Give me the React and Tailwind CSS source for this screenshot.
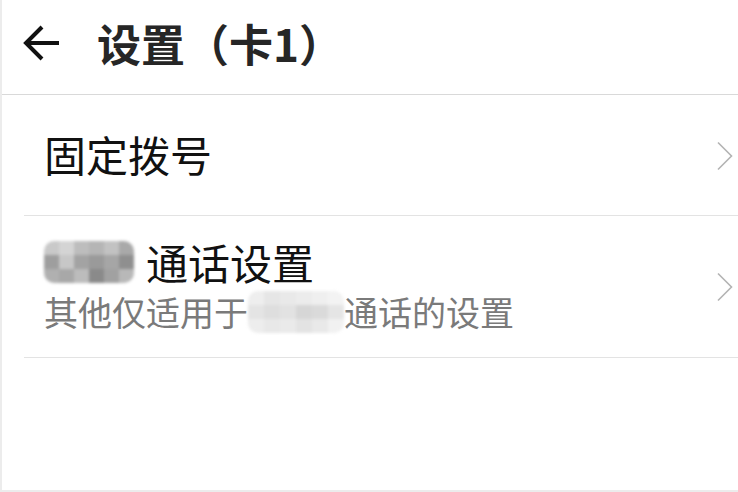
const font = { fontFamily: '"Noto Sans CJK SC", "Noto Sans", sans-serif' };

function BackArrow() {
  return (
    <svg width="38" height="38" viewBox="0 0 38 38" className="shrink-0">
      <path
        d="M3 19 H36 M19 3 L3 19 L19 35"
        fill="none"
        stroke="#111"
        strokeWidth="4"
        strokeLinecap="butt"
        strokeLinejoin="miter"
      />
    </svg>
  );
}

function Chevron() {
  return (
    <svg width="18" height="30" viewBox="0 0 18 30" className="shrink-0">
      <path d="M2 1.5 L15.5 15 L2 28.5" fill="none" stroke="#b3b3b3" strokeWidth="1.6" />
    </svg>
  );
}

function Mosaic({ cells, className }) {
  return (
    <div className={"grid grid-cols-6 overflow-hidden rounded-[10px] blur-[1.5px] " + className}>
      {cells.map((c, i) => (
        <div key={i} className="h-[14px]" style={{ background: c }} />
      ))}
    </div>
  );
}

const simCells = [
  "#c9c9c9", "#d4d4d4", "#bdbdbd", "#b5b5b5", "#c2c2c2", "#a9a9a9",
  "#9e9e9e", "#c7c7c7", "#a3a3a3", "#9a9a9a", "#a6a6a6", "#8f8f8f",
  "#b0b0b0", "#a8a8a8", "#bcbcbc", "#8a8a8a", "#a1a1a1", "#b8b8b8",
];

const subCells = [
  "#eeeeee", "#e6e6e6", "#e9e9e9", "#ececec", "#efefef", "#f3f3f3",
  "#e4e4e4", "#dedede", "#e2e2e2", "#d6d6d6", "#dadada", "#e5e5e5",
  "#ededed", "#e8e8e8", "#eaeaea", "#e3e3e3", "#e9e9e9", "#f1f1f1",
];

export default function App() {
  return (
    <div
      className="w-[738px] h-[492px] bg-white border-l-2 border-b-2 border-[#ececec] overflow-hidden"
      style={font}
    >
      <header className="h-[95px] flex items-center pb-[9px] pl-[21px] border-b border-[#d9d9d9]">
        <BackArrow />
        <h1 className="ml-[36px] text-[44px] leading-none font-bold text-[#262626]">
          设置（卡1）
        </h1>
      </header>

      <div className="pl-[22px]">
        <div className="h-[121px] flex items-center pb-[2px] border-b border-[#e3e3e3]">
          <span className="flex-1 pl-[20px] text-[42px] leading-none text-[#111]">固定拨号</span>
          <div className="pr-[4px] pt-[4px]">
            <Chevron />
          </div>
        </div>

        <div className="h-[142px] flex items-center border-b border-[#e3e3e3]">
          <div className="flex-1 pl-[20px] flex flex-col">
            <div className="flex items-center h-[50px]">
              <Mosaic cells={simCells} className="w-[90px] mr-[12px]" />
              <span className="text-[42px] leading-none text-[#111]">通话设置</span>
            </div>
            <div className="flex items-center h-[50px]">
              <span className="text-[34px] leading-none text-[#7a7a7a]">其他仅适用于</span>
              <Mosaic cells={subCells} className="w-[96px] h-[42px]" />
              <span className="text-[34px] leading-none text-[#7a7a7a]">通话的设置</span>
            </div>
          </div>
          <div className="pr-[4px]">
            <Chevron />
          </div>
        </div>
      </div>
    </div>
  );
}
